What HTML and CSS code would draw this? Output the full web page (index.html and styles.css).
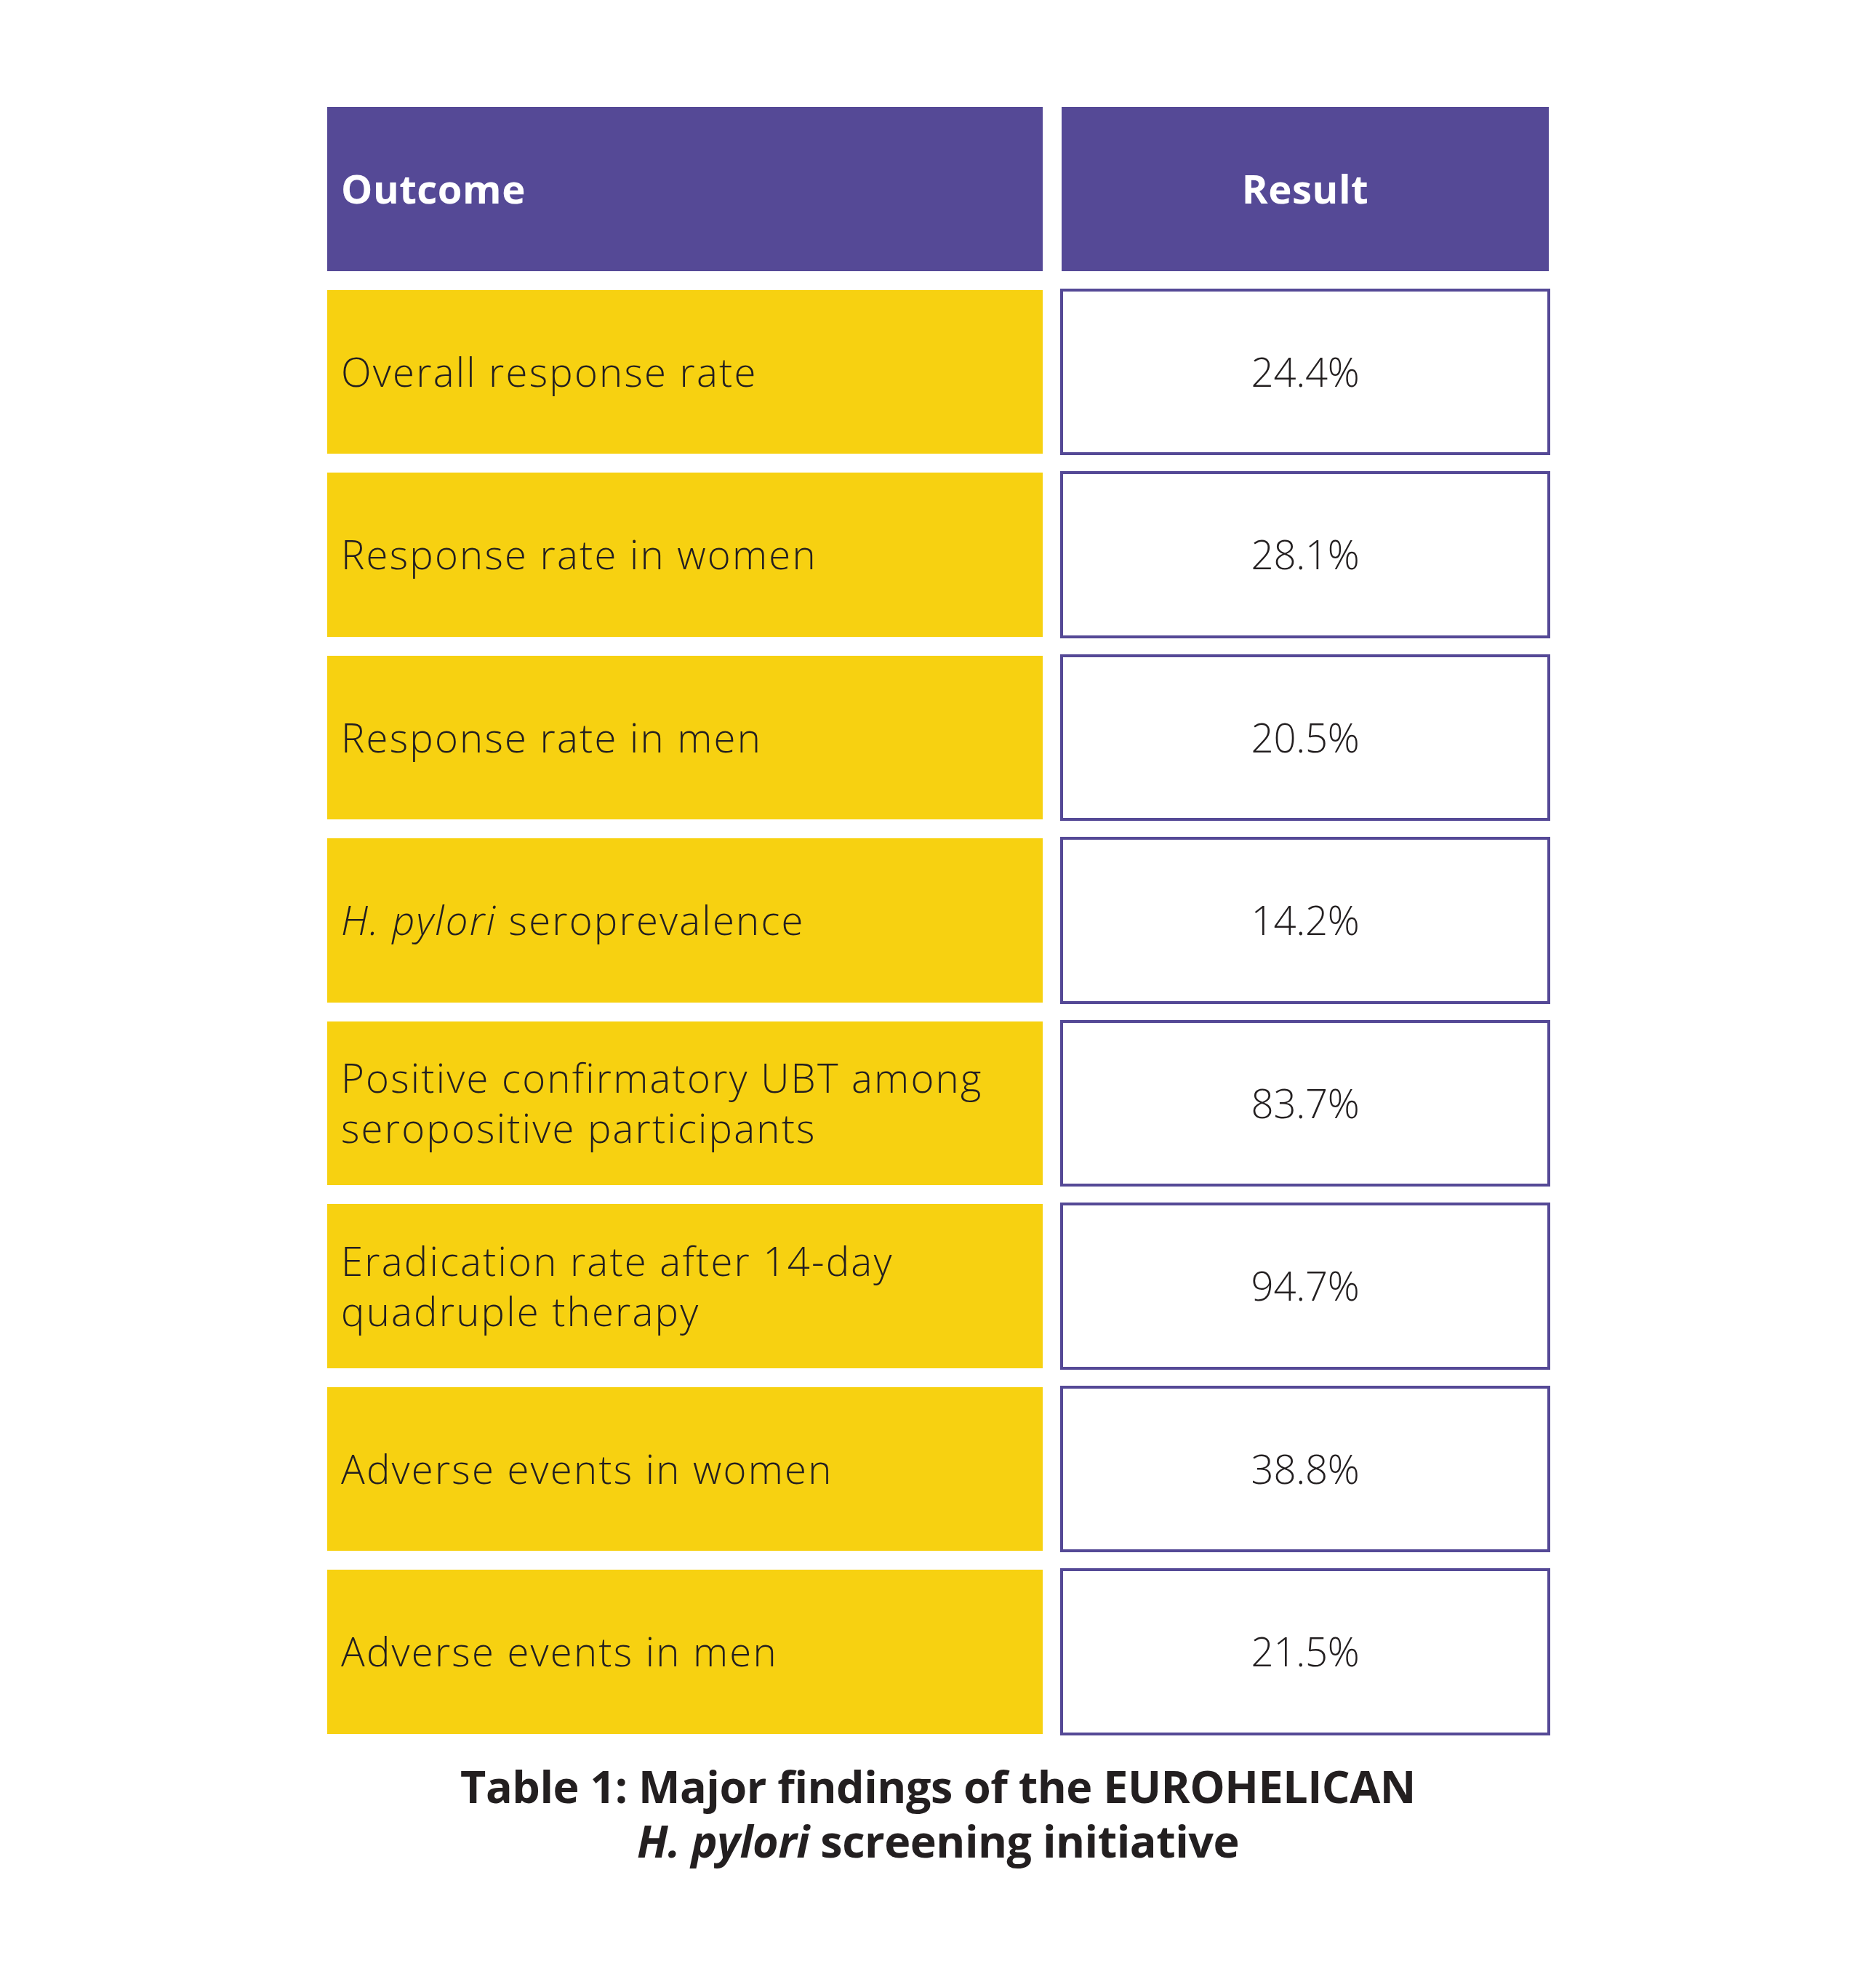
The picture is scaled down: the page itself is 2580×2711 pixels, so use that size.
FILE: index.html
```html
<!DOCTYPE html>
<html lang="en">
<head>
<meta charset="utf-8">
<title>Table 1: Major findings of the EUROHELICAN H. pylori screening initiative</title>
<link rel="stylesheet" href="styles.css">
</head>
<body>
<main class="page">
  <div class="table">
    <div class="cell head head-left">Outcome</div>
    <div class="cell head head-right">Result</div>

    <div class="cell label">Overall response rate</div>
    <div class="cell value">24.4%</div>

    <div class="cell label">Response rate in women</div>
    <div class="cell value">28.1%</div>

    <div class="cell label">Response rate in men</div>
    <div class="cell value">20.5%</div>

    <div class="cell label"><span><em>H. pylori</em> seroprevalence</span></div>
    <div class="cell value">14.2%</div>

    <div class="cell label"><span>Positive confirmatory UBT among<br>seropositive participants</span></div>
    <div class="cell value">83.7%</div>

    <div class="cell label"><span>Eradication rate after 14-day<br>quadruple therapy</span></div>
    <div class="cell value">94.7%</div>

    <div class="cell label">Adverse events in women</div>
    <div class="cell value">38.8%</div>

    <div class="cell label">Adverse events in men</div>
    <div class="cell value">21.5%</div>
  </div>
  <p class="caption">Table 1: Major findings of the EUROHELICAN<br><em>H. pylori</em> screening initiative</p>
</main>
</body>
</html>
```

FILE: styles.css
```css
html, body {
  margin: 0;
  padding: 0;
  background: #ffffff;
}

body {
  font-family: "Open Sans", Lato, "Liberation Sans", sans-serif;
  color: #231f20;
}

.page {
  width: 1680px;
  margin: 0 auto;
  padding-top: 147px;
  padding-bottom: 100px;
}

.table {
  display: grid;
  grid-template-columns: 984px 670px;
  grid-auto-rows: 225.5px;
  column-gap: 26px;
  row-gap: 26px;
}

.cell {
  display: flex;
  align-items: center;
  box-sizing: border-box;
  font-size: 54.5px;
  line-height: 69px;
}

.head {
  background: #554996;
  color: #ffffff;
  font-weight: 700;
  letter-spacing: 0.5px;
}

.head-left {
  padding-left: 19px;
}

.head-right {
  justify-content: center;
}

.label {
  background: #f7d111;
  padding-left: 19px;
  font-weight: 300;
  letter-spacing: 2.2px;
}

.value {
  justify-content: center;
  border: 4.5px solid #554996;
  margin: -2px;
  background: #ffffff;
  font-weight: 300;
  letter-spacing: -0.3px;
}

.caption {
  margin: 34px 0 0;
  text-align: center;
  font-size: 61px;
  line-height: 75px;
  font-weight: 700;
  letter-spacing: -0.5px;
  color: #231f20;
}
```
